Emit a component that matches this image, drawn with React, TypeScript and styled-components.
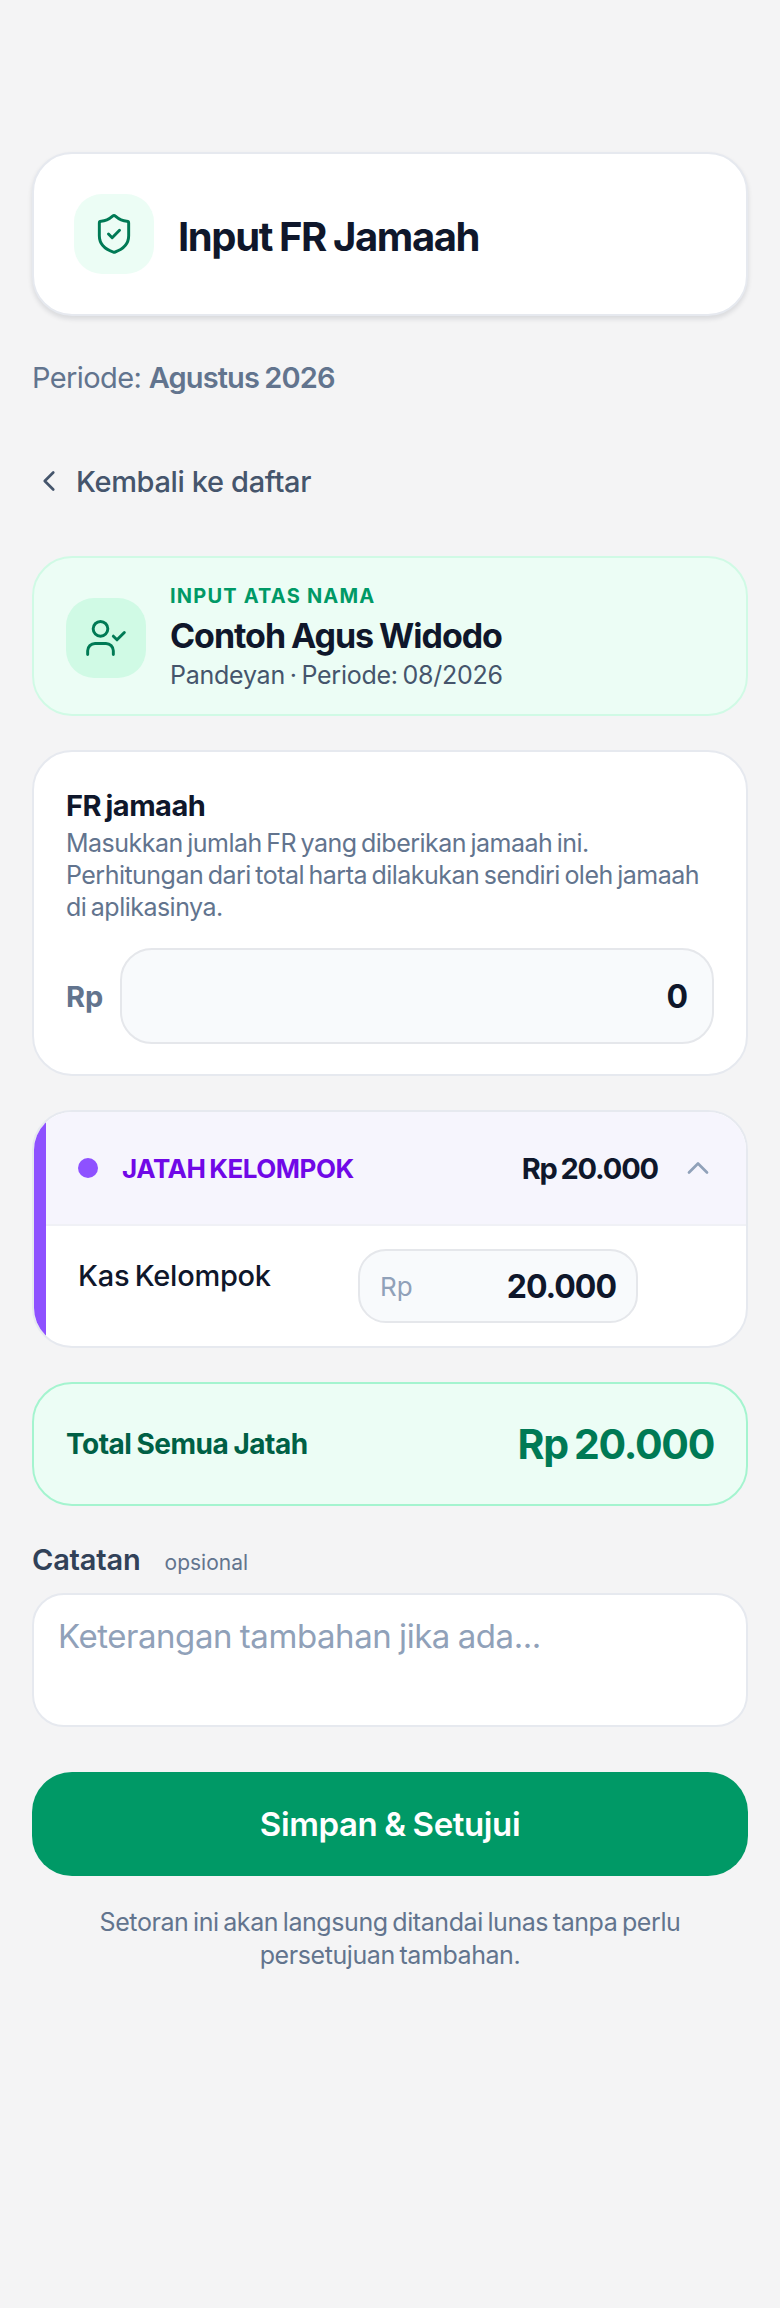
import { useState } from 'react';
import styled, { createGlobalStyle } from 'styled-components';
import { ChevronLeft, ChevronUp, ShieldCheck, UserCheck } from 'lucide-react';

const formatAmount = (value: number) => value.toLocaleString('id-ID');

const App = () => {
  const [open, setOpen] = useState(true);
  const [notes, setNotes] = useState('');
  const [contribution, setContribution] = useState('0');
  const kas = 20000;

  return (
    <Page>
      <GlobalStyle />
      <HeaderCard>
        <HeaderIcon>
          <ShieldCheck size={44} strokeWidth={1.6} />
        </HeaderIcon>
        <Title>Input FR Jamaah</Title>
      </HeaderCard>

      <Period>
        Periode: <strong>Agustus 2026</strong>
      </Period>

      <BackButton type="button">
        <ChevronLeft size={34} strokeWidth={1.9} />
        Kembali ke daftar
      </BackButton>

      <Stack>
        <PersonCard>
          <PersonIcon>
            <UserCheck size={44} strokeWidth={1.6} />
          </PersonIcon>
          <div>
            <Eyebrow>INPUT ATAS NAMA</Eyebrow>
            <PersonName>Contoh Agus Widodo</PersonName>
            <PersonMeta>Pandeyan · Periode: 08/2026</PersonMeta>
          </div>
        </PersonCard>

        <FrCard>
          <CardTitle>FR jamaah</CardTitle>
          <CardHint>
            Masukkan jumlah FR yang diberikan jamaah ini.
            <br />
            Perhitungan dari total harta dilakukan sendiri oleh jamaah
            <br />
            di aplikasinya.
          </CardHint>
          <AmountRow>
            <Currency>Rp</Currency>
            <AmountInput
              value={contribution}
              onChange={e => setContribution(e.target.value)}
            />
          </AmountRow>
        </FrCard>

        <ShareCard>
          <ShareAccent />
          <ShareContent>
            <ShareHeader onClick={() => setOpen(!open)}>
              <Dot />
              <ShareLabel>JATAH KELOMPOK</ShareLabel>
              <ShareSum>Rp {formatAmount(kas)}</ShareSum>
              <ShareToggle>
                <ChevronUp size={36} strokeWidth={1.8} />
              </ShareToggle>
            </ShareHeader>
            {open && (
              <ShareBody>
                <ShareName>Kas Kelompok</ShareName>
                <ShareField>
                  <ShareUnit>Rp</ShareUnit>
                  <ShareValue>{formatAmount(kas)}</ShareValue>
                </ShareField>
              </ShareBody>
            )}
          </ShareContent>
        </ShareCard>

        <TotalCard>
          <TotalLabel>Total Semua Jatah</TotalLabel>
          <TotalValue>Rp {formatAmount(kas)}</TotalValue>
        </TotalCard>
      </Stack>

      <NotesLabel>
        Catatan <NotesOptional>opsional</NotesOptional>
      </NotesLabel>
      <NotesInput
        placeholder="Keterangan tambahan jika ada..."
        value={notes}
        onChange={e => setNotes(e.target.value)}
      />

      <SubmitButton type="button">Simpan &amp; Setujui</SubmitButton>
      <Footnote>
        Setoran ini akan langsung ditandai lunas tanpa perlu
        <br />
        persetujuan tambahan.
      </Footnote>
    </Page>
  );
};

const GlobalStyle = createGlobalStyle`
  * {
    box-sizing: border-box;
  }

  body {
    margin: 0;
    background: #f4f4f5;
    font-family: Inter, "Noto Sans", sans-serif;
    color: #0f172b;
  }
`;

const Page = styled.div`
  min-height: 2308px;
  padding: 152px 32px 0;
  display: flex;
  flex-direction: column;
`;

const HeaderCard = styled.div`
  display: flex;
  align-items: center;
  gap: 24px;
  padding: 40px;
  background: #fff;
  border: 2px solid #e6e9ef;
  border-radius: 40px;
  box-shadow: 0 3px 5px rgba(15, 23, 42, 0.12);
`;

const HeaderIcon = styled.div`
  width: 80px;
  height: 80px;
  display: flex;
  align-items: center;
  justify-content: center;
  border-radius: 28px;
  background: #ecfdf5;
  color: #007a55;
`;

const Title = styled.h1`
  margin: 0;
  padding-top: 4px;
  font-size: 40px;
  font-weight: 700;
  letter-spacing: -1.4px;
  word-spacing: -1px;
  color: #0f172b;
`;

const Period = styled.div`
  margin-top: 43px;
  font-size: 29px;
  line-height: 38px;
  letter-spacing: -0.6px;
  color: #62748e;

  strong {
    font-weight: 600;
    letter-spacing: -0.9px;
    word-spacing: -1px;
  }
`;

const BackButton = styled.button`
  margin-top: 56px;
  height: 56px;
  padding: 0;
  align-self: flex-start;
  display: flex;
  align-items: center;
  gap: 10px;
  border: none;
  background: none;
  font-family: inherit;
  font-size: 29px;
  font-weight: 450;
  letter-spacing: -0.35px;
  color: #45556c;
`;

const Stack = styled.div`
  margin-top: 47px;
  display: flex;
  flex-direction: column;
  gap: 34px;
`;

const PersonCard = styled.div`
  display: flex;
  align-items: center;
  gap: 24px;
  padding: 24px 32px 21px;
  background: #ecfdf5;
  border: 2px solid #d0fae5;
  border-radius: 40px;
`;

const PersonIcon = styled.div`
  width: 80px;
  height: 80px;
  display: flex;
  align-items: center;
  justify-content: center;
  border-radius: 28px;
  background: #d0fae5;
  color: #007a55;
`;

const Eyebrow = styled.div`
  font-size: 20px;
  line-height: 28px;
  font-weight: 700;
  letter-spacing: 1.2px;
  color: #009966;
`;

const PersonName = styled.div`
  margin-top: 4px;
  font-size: 34px;
  line-height: 44px;
  font-weight: 700;
  letter-spacing: -1.05px;
  word-spacing: -1px;
  color: #0f172b;
`;

const PersonMeta = styled.div`
  font-size: 25px;
  line-height: 35px;
  letter-spacing: -0.25px;
  word-spacing: -2px;
  color: #45556c;
`;

const Card = styled.div`
  background: #fff;
  border: 2px solid #e6e9ef;
  border-radius: 40px;
`;

const FrCard = styled(Card)`
  padding: 34px 32px 30px;
`;

const CardTitle = styled.div`
  font-size: 29px;
  line-height: 40px;
  font-weight: 700;
  letter-spacing: -0.5px;
  word-spacing: -2px;
  color: #0f172b;
`;

const CardHint = styled.div`
  margin-top: 1px;
  font-size: 25px;
  line-height: 32px;
  letter-spacing: -0.52px;
  word-spacing: -2px;
  white-space: nowrap;
  color: #62748e;
`;

const AmountRow = styled.div`
  margin-top: 25px;
  display: flex;
  align-items: center;
  gap: 17px;
`;

const Currency = styled.span`
  font-size: 29px;
  font-weight: 700;
  color: #62748e;
`;

const AmountInput = styled.input`
  flex: 1;
  min-width: 0;
  height: 96px;
  padding: 0 24px;
  background: #f8fafc;
  border: 2px solid #e5e7eb;
  border-radius: 32px;
  font-family: inherit;
  font-size: 32px;
  font-weight: 700;
  text-align: right;
  color: #0f172b;

  &:focus {
    outline: none;
  }
`;

const ShareCard = styled(Card)`
  display: flex;
  overflow: hidden;
`;

const ShareAccent = styled.div`
  flex: 0 0 12px;
  background: #8e51ff;
`;

const ShareContent = styled.div`
  flex: 1;
  min-width: 0;
`;

const ShareHeader = styled.div`
  height: 114px;
  padding: 0 30px 0 32px;
  display: flex;
  align-items: center;
  background: #f6f5fd;
  border-bottom: 2px solid #f0f1f6;
  cursor: pointer;
`;

const Dot = styled.span`
  width: 20px;
  height: 20px;
  border-radius: 50%;
  background: #8e51ff;
`;

const ShareLabel = styled.span`
  margin-left: 24px;
  flex: 1;
  font-size: 26px;
  font-weight: 700;
  letter-spacing: -0.45px;
  word-spacing: -2px;
  color: #7008e7;
`;

const ShareSum = styled.span`
  font-size: 29px;
  font-weight: 700;
  letter-spacing: -1.15px;
  word-spacing: -2px;
  color: #0f172b;
`;

const ShareToggle = styled.span`
  margin-left: 22px;
  display: flex;
  color: #90a1b9;
`;

const ShareBody = styled.div`
  padding: 23px 108px 23px 32px;
  display: grid;
  grid-template-columns: 1fr 280px;
`;

const ShareName = styled.div`
  margin-top: 7px;
  font-size: 29px;
  line-height: 40px;
  font-weight: 500;
  letter-spacing: -0.25px;
  word-spacing: -2px;
  color: #0f172b;
`;

const ShareField = styled.div`
  height: 74px;
  padding: 0 20px;
  display: flex;
  align-items: center;
  justify-content: space-between;
  background: #f8fafc;
  border: 2px solid #e5e7eb;
  border-radius: 28px;
`;

const ShareUnit = styled.span`
  font-size: 26px;
  color: #90a1b9;
`;

const ShareValue = styled.span`
  font-size: 32px;
  font-weight: 700;
  letter-spacing: -1px;
  color: #0f172b;
`;

const TotalCard = styled.div`
  height: 124px;
  padding: 0 32px;
  display: flex;
  align-items: center;
  justify-content: space-between;
  background: #ecfdf5;
  border: 2px solid #a4f4cf;
  border-radius: 40px;
`;

const TotalLabel = styled.span`
  font-size: 28px;
  font-weight: 700;
  letter-spacing: -0.5px;
  word-spacing: -1px;
  color: #006045;
`;

const TotalValue = styled.span`
  font-size: 41px;
  font-weight: 700;
  letter-spacing: -1.3px;
  word-spacing: -2px;
  color: #007a55;
`;

const NotesLabel = styled.div`
  margin-top: 34px;
  font-size: 29px;
  line-height: 40px;
  font-weight: 600;
  letter-spacing: -0.2px;
  color: #314158;
`;

const NotesOptional = styled.span`
  margin-left: 17px;
  font-size: 21px;
  font-weight: 400;
  letter-spacing: 0;
  color: #62748e;
`;

const NotesInput = styled.textarea`
  margin-top: 10px;
  display: block;
  width: 100%;
  height: 134px;
  padding: 19px 24px;
  background: #fff;
  border: 2px solid #e6e9ef;
  border-radius: 32px;
  resize: none;
  font-family: inherit;
  font-size: 33px;
  line-height: 44px;
  letter-spacing: -0.45px;
  word-spacing: -1px;
  color: #0f172b;

  &::placeholder {
    color: #90a1b9;
  }

  &:focus {
    outline: none;
  }
`;

const SubmitButton = styled.button`
  margin-top: 45px;
  height: 104px;
  border: none;
  border-radius: 40px;
  background: #009966;
  font-family: inherit;
  font-size: 33px;
  font-weight: 600;
  letter-spacing: -0.4px;
  word-spacing: -1px;
  color: #fff;
`;

const Footnote = styled.p`
  margin: 30px 0 0;
  font-size: 25px;
  line-height: 33px;
  letter-spacing: -0.42px;
  word-spacing: -2px;
  text-align: center;
  color: #62748e;
`;

export default App;
